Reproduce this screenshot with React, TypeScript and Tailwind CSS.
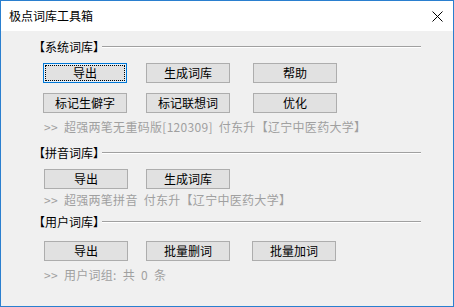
import React from 'react';

const font = { fontFamily: '"Noto Sans CJK SC", "Noto Sans", sans-serif' };

interface BtnProps {
    label: string;
    focused?: boolean;
    className?: string;
}

const Btn: React.FC<BtnProps> = ({ label, focused, className = '' }) => {
    if (focused) {
        return (
            <button className={`w-[84px] h-[20px] border border-[#0078d7] bg-[#e5f1fb] p-[1px] flex ${className}`}>
                <span className="flex-1 flex items-center justify-center border border-dotted border-black text-[12px] leading-none text-black bg-[#e1e1e1]">
                    {label}
                </span>
            </button>
        );
    }
    return (
        <button className={`w-[84px] h-[20px] border border-[#adadad] bg-[#e1e1e1] flex items-center justify-center text-[12px] leading-none text-black ${className}`}>
            {label}
        </button>
    );
};

const GroupHeader: React.FC<{ title: string; className?: string }> = ({ title, className = '' }) => (
    <div className={`flex items-center h-[16px] ${className}`}>
        <span className="text-[12px] leading-none text-black whitespace-nowrap">{title}</span>
        <div className="flex-1 -ml-[3px] flex flex-col">
            <div className="h-[1px] bg-[#a0a0a0]" />
            <div className="h-[1px] bg-white" />
        </div>
    </div>
);

const Note: React.FC<{ text: string; className?: string }> = ({ text, className = '' }) => (
    <div className={`h-[16px] pl-[9px] flex items-center text-[12px] leading-none text-[#a0a0a0] whitespace-pre tracking-[0.3px] ${className}`}>
        {text}
    </div>
);

const App: React.FC = () => {
    return (
        <div className="w-[454px] h-[307px] border border-[#2a7fcf] bg-[#f0f0f0] flex flex-col" style={font}>
            {/* title bar */}
            <div className="h-[30px] bg-white flex items-center justify-between pl-[8px] pr-[9px]">
                <span className="text-[12px] leading-none text-black">极点词库工具箱</span>
                <svg width="11" height="11" viewBox="0 0 11 11" className="mr-[1px]">
                    <path d="M0.5 0.5 L10.5 10.5 M10.5 0.5 L0.5 10.5" stroke="#000" strokeWidth="1" />
                </svg>
            </div>

            <div className="flex flex-col pl-[32px] pr-[32px]">
                <GroupHeader title="【系统词库】" className="mt-[8px]" />
                <div className="flex mt-[8px] pl-[10px]">
                    <Btn label="导出" focused />
                    <Btn label="生成词库" className="ml-[19px]" />
                    <Btn label="帮助" className="ml-[23px]" />
                </div>
                <div className="flex mt-[10px] pl-[10px]">
                    <Btn label="标记生僻字" />
                    <Btn label="标记联想词" className="ml-[19px]" />
                    <Btn label="优化" className="ml-[23px]" />
                </div>
                <Note text=">>  超强两笔无重码版[120309]  付东升【辽宁中医药大学】" className="mt-[6px] pl-[11px]" />

                <GroupHeader title="【拼音词库】" className="mt-[10px]" />
                <div className="flex mt-[8px] pl-[11px]">
                    <Btn label="导出" />
                    <Btn label="生成词库" className="ml-[18px]" />
                </div>
                <Note text=">>  超强两笔拼音  付东升【辽宁中医药大学】" className="mt-[3px] pl-[11px]" />

                <GroupHeader title="【用户词库】" className="mt-[6px]" />
                <div className="flex mt-[11px] pl-[11px]">
                    <Btn label="导出" />
                    <Btn label="批量删词" className="ml-[18px]" />
                    <Btn label="批量加词" className="ml-[22px]" />
                </div>
                <Note text=">>  用户词组:  共  0  条" className="mt-[6px] pl-[11px]" />
            </div>
        </div>
    );
};

export default App;
